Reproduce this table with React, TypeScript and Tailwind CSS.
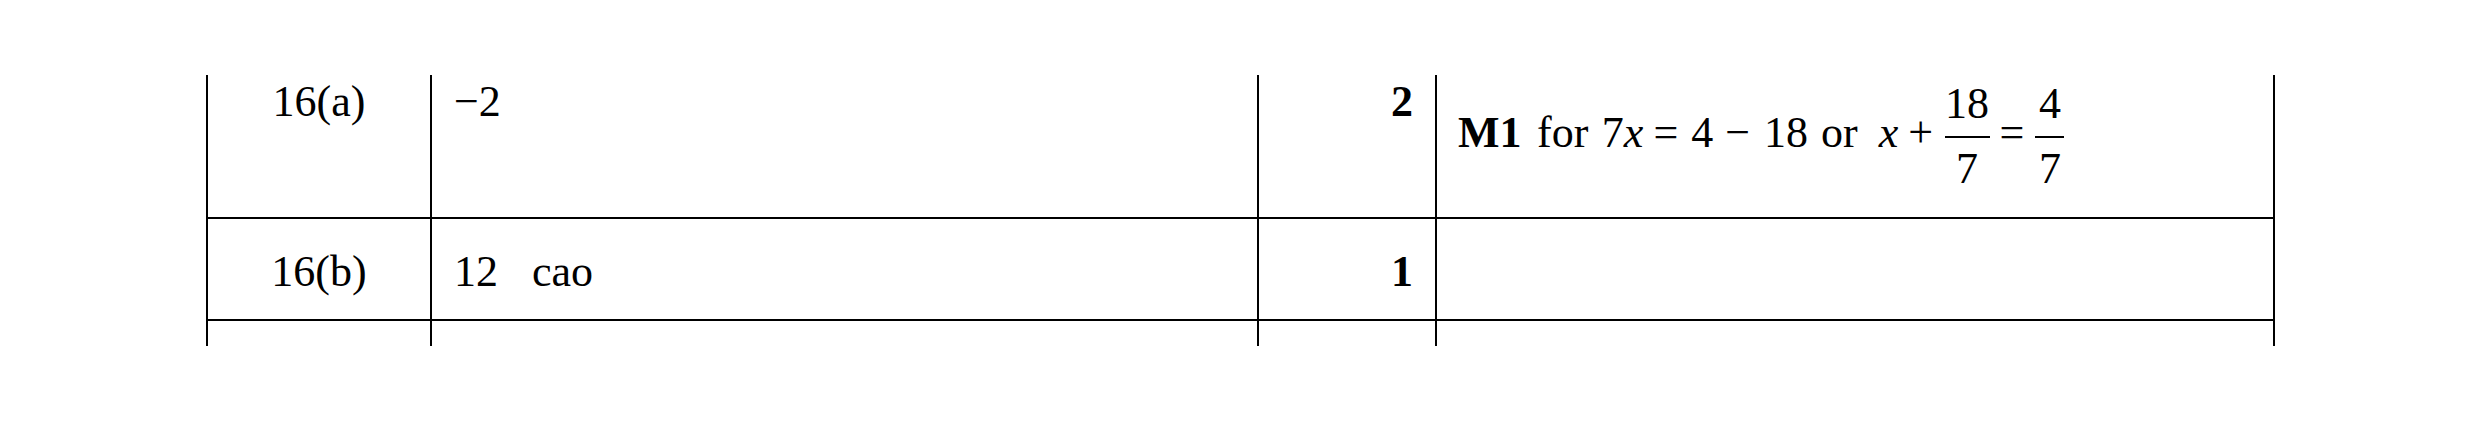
type Cell = {
  children?: React.ReactNode;
  className?: string;
};

const SERIF = "font-['Liberation_Serif','Times_New_Roman',serif]";

function C({ children, className = "" }: Cell) {
  return <div className={`border-l-2 border-black ${SERIF} ${className}`}>{children}</div>;
}

function Tok({ children, className = "" }: Cell) {
  return <span className={`mt-[33px] whitespace-pre ${SERIF} ${className}`}>{children}</span>;
}

interface FracProps {
  num: string;
  den: string;
  className?: string;
}

function Frac({ num, den, className = "" }: FracProps) {
  return (
    <span className={`mt-[7px] flex flex-col items-center leading-[44px] ${SERIF} ${className}`}>
      <span className={`h-[44px] ${SERIF}`}>{num}</span>
      <span className="mt-[10px] h-[1.5px] w-full bg-black" />
      <span className={`mt-[9.5px] h-[44px] ${SERIF}`}>{den}</span>
    </span>
  );
}

const ROW = "grid grid-cols-[224px_827px_178px_840px]";

export default function App() {
  return (
    <div className={`min-h-[422px] w-[2481px] bg-white pl-[206px] pt-[75px] ${SERIF} text-[44px] leading-[50px] text-black`}>
      {/* 16(a) */}
      <div className={`${ROW} h-[144px]`}>
        <C className="border-b-2 pt-[2px] text-center">16(a)</C>
        <C className="border-b-2 pl-[22px] pt-[2px]">−2</C>
        <C className="border-b-2 pr-[22px] pt-[2px] text-right font-bold">2</C>
        <C className="flex items-start border-b-2 border-r-2 pl-[21px]">
          <Tok className="font-bold">M1</Tok>
          <Tok className="ml-[15.5px]">for</Tok>
          <Tok className="ml-[13.5px]">7</Tok>
          <Tok className="italic">x</Tok>
          <Tok className="ml-[10px]">=</Tok>
          <Tok className="ml-[13px]">4</Tok>
          <Tok className="ml-[12px]">−</Tok>
          <Tok className="ml-[14px]">18</Tok>
          <Tok className="ml-[13px]">or</Tok>
          <Tok className="ml-[21px] italic">x</Tok>
          <Tok className="ml-[10px]">+</Tok>
          <Frac num="18" den="7" className="ml-[11.5px] w-[45px]" />
          <Tok className="ml-[10px]">=</Tok>
          <Frac num="4" den="7" className="ml-[11px] w-[29px]" />
        </C>
      </div>

      {/* 16(b) */}
      <div className={`${ROW} h-[102px]`}>
        <C className="border-b-2 pt-[28px] text-center">16(b)</C>
        <C className="border-b-2 pl-[22px] pt-[28px]">
          12<span className={`ml-[34px] ${SERIF}`}>cao</span>
        </C>
        <C className="border-b-2 pr-[22px] pt-[28px] text-right font-bold">1</C>
        <C className="border-b-2 border-r-2" />
      </div>

      {/* next row, cut off */}
      <div className={`${ROW} h-[25px]`}>
        <C />
        <C />
        <C />
        <C className="border-r-2" />
      </div>
    </div>
  );
}
